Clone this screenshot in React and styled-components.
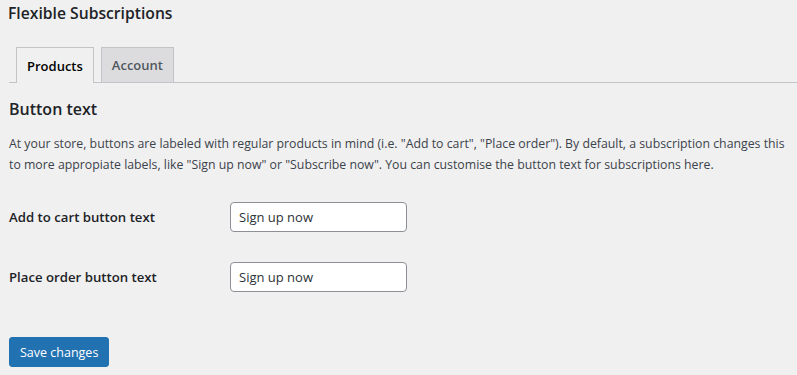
import React from "react";
import styled, { createGlobalStyle } from "styled-components";

const GlobalStyle = createGlobalStyle`
  html, body {
    margin: 0;
    padding: 0;
    background: #f0f0f1;
  }
  body {
    font-family: "Open Sans", "Noto Sans", sans-serif;
    color: #1d2327;
  }
`;

const App = () => {
  return (
    <>
      <GlobalStyle />
      <Wrap>
        <Title>Flexible Subscriptions</Title>
        <TabBar>
          <Tab active>Products</Tab>
          <Tab>Account</Tab>
        </TabBar>
        <SectionTitle>Button text</SectionTitle>
        <Intro>
          At your store, buttons are labeled with regular products in mind
          (i.e. "Add to cart", "Place order"). By default, a subscription
          changes this to more appropiate labels, like "Sign up now" or
          "Subscribe now". You can customise the button text for subscriptions
          here.
        </Intro>
        <FormTable>
          <Row>
            <Label htmlFor="add-to-cart">Add to cart button text</Label>
            <TextInput id="add-to-cart" defaultValue="Sign up now" />
          </Row>
          <Row>
            <Label htmlFor="place-order">Place order button text</Label>
            <TextInput id="place-order" defaultValue="Sign up now" />
          </Row>
        </FormTable>
        <SaveButton>Save changes</SaveButton>
      </Wrap>
    </>
  );
};

const Wrap = styled.div`
  padding: 0 0 0 9px;
  display: flex;
  flex-direction: column;
  align-items: flex-start;
`;

const Title = styled.h1`
  margin: 0 0 0 -1px;
  padding: 1px 0 0 0;
  font-size: 15.7px;
  line-height: 24px;
  font-weight: 600;
`;

const TabBar = styled.div`
  align-self: stretch;
  display: flex;
  gap: 7px;
  margin-top: 22px;
  padding-left: 7px;
  border-bottom: 1px solid #c3c4c7;
`;

const Tab = styled.div`
  box-sizing: border-box;
  padding: 0 10px;
  display: flex;
  align-items: center;
  font-size: 13px;
  font-weight: 600;
  border: 1px solid #c3c4c7;
  border-bottom: none;
  margin-bottom: ${(p) => (p.active ? "-1px" : "0")};
  height: ${(p) => (p.active ? "36px" : "35px")};
  background: ${(p) => (p.active ? "#f0f0f1" : "#dcdcde")};
  color: ${(p) => (p.active ? "#000" : "#50575e")};
`;

const SectionTitle = styled.h2`
  margin: 14px 0 0 0;
  font-size: 16px;
  line-height: 24px;
  font-weight: 600;
`;

const Intro = styled.p`
  margin: 12px 0 0 0;
  max-width: 778px;
  font-size: 12.3px;
  line-height: 21px;
  color: #3c434a;
`;

const FormTable = styled.div`
  margin-top: 27px;
  display: flex;
  flex-direction: column;
  gap: 30px;
`;

const Row = styled.div`
  display: flex;
  align-items: center;
`;

const Label = styled.label`
  width: 221px;
  font-size: 13.2px;
  font-weight: 600;
  color: #1d2327;
`;

const TextInput = styled.input`
  width: 177px;
  height: 30px;
  box-sizing: border-box;
  padding: 0 8px;
  border: 1px solid #8c8f94;
  border-radius: 4px;
  background: #fff;
  font-family: inherit;
  font-size: 13px;
  color: #2c3338;
`;

const SaveButton = styled.button`
  margin-top: 45px;
  height: 30px;
  padding: 0 10px;
  border: 1px solid #2271b1;
  border-radius: 3px;
  background: #2271b1;
  color: #fff;
  font-family: inherit;
  font-size: 12.5px;
  cursor: pointer;
`;

export default App;
